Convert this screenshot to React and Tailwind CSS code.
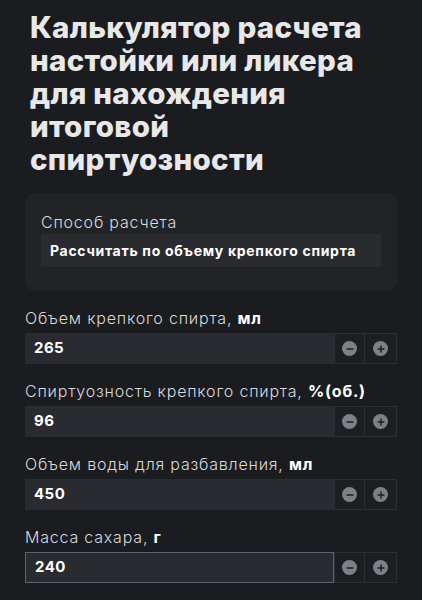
import { Minus, Plus } from "lucide-react";

const fields = [
  { label: "Объем крепкого спирта, ", unit: "мл", value: "265" },
  { label: "Спиртуозность крепкого спирта, ", unit: "%(об.)", value: "96" },
  { label: "Объем воды для разбавления, ", unit: "мл", value: "450" },
  { label: "Масса сахара, ", unit: "г", value: "240", focused: true },
];

function RoundIcon({ children }) {
  return (
    <span className="flex h-[15px] w-[15px] items-center justify-center rounded-full bg-[#7d8087] text-[#1d1e22]">
      {children}
    </span>
  );
}

function Field({ label, unit, value, focused }) {
  return (
    <div>
      <div className="text-[16px] font-light leading-5 tracking-[0.05em] text-[#d9dadd]">
        {label}
        <span className="font-bold text-white">{unit}</span>
      </div>
      <div className="mt-[5px] flex h-[31px]">
        <div
          className={
            "flex flex-1 items-center bg-[#2a2b30] pl-[9px] text-[15px] font-bold tracking-[0.03em] text-white " +
            (focused ? "border border-[#5b6374] pl-[8px]" : "")
          }
        >
          {value}
        </div>
        <button className="flex w-[31px] items-center justify-center border border-[#2d2e33] bg-[#1d1e22]">
          <RoundIcon>
            <Minus size={10} strokeWidth={3.5} />
          </RoundIcon>
        </button>
        <button className="flex w-[32px] items-center justify-center border border-l-0 border-[#2d2e33] bg-[#1d1e22]">
          <RoundIcon>
            <Plus size={10} strokeWidth={3.5} />
          </RoundIcon>
        </button>
      </div>
    </div>
  );
}

export default function App() {
  return (
    <div
      className="min-h-[600px] bg-[#1b1c20] px-[25px] pt-[11px]"
      style={{ fontFamily: "Inter, 'Noto Sans', sans-serif" }}
    >
      <h1 className="pl-[5px] text-[29.5px] font-extrabold leading-[33px] tracking-[0.01em] text-[#e8e8ea]">
        Калькулятор расчета настойки или ликера для нахождения итоговой спиртуозности
      </h1>

      <div className="mt-[17px] rounded-[10px] bg-[#222327] px-[16px] pb-[24px] pt-[19px]">
        <div className="text-[16px] font-light leading-5 tracking-[0.05em] text-[#d9dadd]">Способ расчета</div>
        <div className="mt-[2px] flex h-[33px] items-center bg-[#2a2b2f] px-[9px] text-[14px] font-bold tracking-[0.05em] text-white">
          Рассчитать по объему крепкого спирта
        </div>
      </div>

      <div className="mt-[17px] flex flex-col gap-[17px]">
        {fields.map((f) => (
          <Field key={f.label} {...f} />
        ))}
      </div>
    </div>
  );
}
